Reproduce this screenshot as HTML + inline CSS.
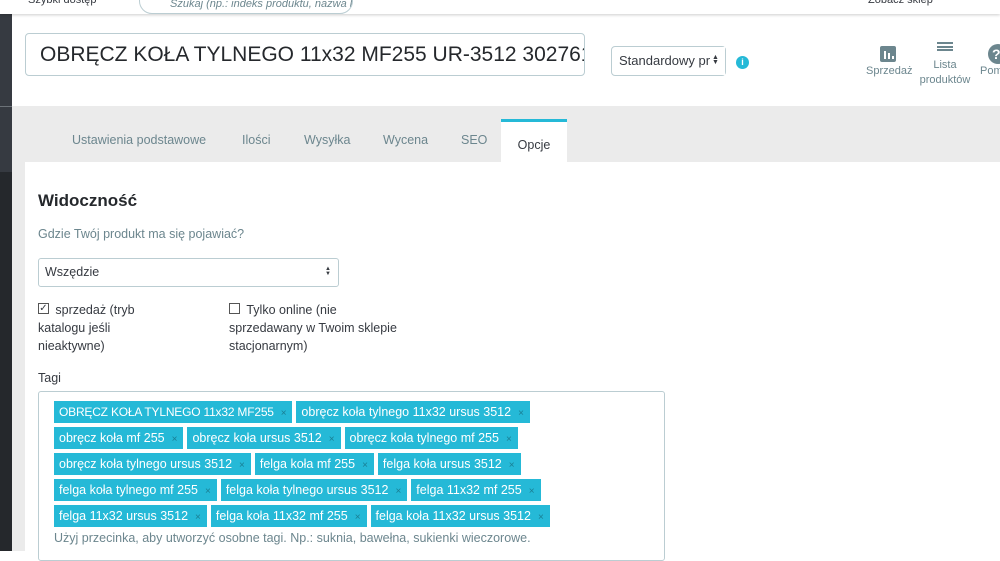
<!DOCTYPE html>
<html><head><meta charset="utf-8"><style>
*{box-sizing:border-box;margin:0;padding:0}
body{width:1000px;height:551px;overflow:hidden;background:#fff;font-family:"Liberation Sans","DejaVu Sans",sans-serif;position:relative;color:#363a41}
.abs{position:absolute}
.tag{display:inline-block;background:#25b9d7;color:#fff;font-size:12.5px;height:22px;line-height:22px;padding:0 6px 0 5px;margin:0 4px 4px 0;white-space:nowrap}
.tag i{font-style:normal;color:#1a7f94;font-size:10px;margin-left:7px}
.tag.u{font-size:12px;letter-spacing:-0.2px}
.tab{position:absolute;top:133px;font-size:12.5px;color:#6c868e}
</style></head><body>
<div class="abs" style="left:0;top:0;width:1000px;height:14px;background:#fff;box-shadow:0 1px 3px rgba(0,0,0,.2);z-index:2"></div>
<div class="abs" style="left:28px;top:-6px;font-size:11px;color:#363a41;z-index:3">Szybki dostęp</div>
<div class="abs" style="left:139px;top:-12px;width:214px;height:26px;border:1px solid #bbcdd2;border-radius:13px;background:#fff;z-index:3;font-size:11px;font-style:italic;color:#6c868e;padding:9px 0 0 30px;white-space:nowrap;overflow:hidden">Szukaj (np.: indeks produktu, nazwa kl</div>
<div class="abs" style="left:868px;top:-6px;font-size:11px;z-index:3">Zobacz sklep</div>
<div class="abs" style="left:0;top:14px;width:12px;height:158px;background:#363a41"></div>
<div class="abs" style="left:0;top:106px;width:12px;height:1px;background:#6c7278"></div>
<div class="abs" style="left:0;top:172px;width:12px;height:379px;background:#25282c"></div>
<div class="abs" style="left:25px;top:33px;width:560px;height:43px;border:1px solid #bbcdd2;border-radius:4px;font-size:21px;line-height:42px;padding-left:14px;overflow:hidden;white-space:nowrap;color:#25282c">OBRĘCZ KOŁA TYLNEGO 11x32 MF255 UR-3512 3027613</div>
<div class="abs" style="left:611px;top:46px;width:115px;height:30px;border:1px solid #bbcdd2;border-radius:4px;font-size:13px;line-height:28px;padding-left:7px;overflow:hidden;white-space:nowrap;background:#fff">Standardowy pr</div>
<div class="abs" style="left:710px;top:47px;width:15px;height:28px;background:#fff"></div>
<div class="abs" style="left:712px;top:55px;font-size:7px;line-height:5px">▲<br>▼</div>
<div class="abs" style="left:736px;top:56px;width:13px;height:13px;border-radius:50%;background:#25b9d7;color:#fff;font-size:9px;font-weight:bold;text-align:center;line-height:13px">i</div>
<div class="abs" style="left:880px;top:46px;width:16px;height:16px;background:#6c868e;border-radius:2px"></div>
<div class="abs" style="left:884px;top:51px;width:2px;height:8px;background:#fff"></div><div class="abs" style="left:888px;top:53px;width:2px;height:6px;background:#fff"></div><div class="abs" style="left:892px;top:56px;width:2px;height:3px;background:#fff"></div>
<div class="abs" style="left:866px;top:65px;font-size:11px;color:#6c868e">Sprzedaż</div>
<div class="abs" style="left:937px;top:42px;width:16px;height:9px;border-top:2px solid #6c868e;border-bottom:2px solid #6c868e"></div>
<div class="abs" style="left:937px;top:46px;width:16px;height:2px;background:#6c868e"></div>
<div class="abs" style="left:918px;top:58px;font-size:11px;color:#6c868e;text-align:center;width:54px;line-height:15px">Lista<br>produktów</div>
<div class="abs" style="left:988px;top:44px;width:20px;height:20px;border-radius:50%;background:#6c868e;color:#fff;font-weight:bold;font-size:14px;line-height:20px;padding-left:4px">?</div>
<div class="abs" style="left:980px;top:65px;font-size:11px;color:#6c868e">Pom</div>
<div class="abs" style="left:12px;top:106px;width:988px;height:445px;background:#ebebeb"></div>
<div class="tab" style="left:72px">Ustawienia podstawowe</div>
<div class="tab" style="left:242px">Ilości</div>
<div class="tab" style="left:304px">Wysyłka</div>
<div class="tab" style="left:383px">Wycena</div>
<div class="tab" style="left:461px">SEO</div>
<div class="abs" style="left:501px;top:119px;width:66px;height:44px;background:#fff;border-top:3px solid #25b9d7;font-size:12.5px;color:#363a41;text-align:center;padding-top:16px">Opcje</div>
<div class="abs" style="left:25px;top:162px;width:975px;height:389px;background:#fff"></div>
<div class="abs" style="left:38px;top:191px;font-size:17px;font-weight:bold;color:#25282c">Widoczność</div>
<div class="abs" style="left:38px;top:227px;font-size:12.5px;color:#6c868e">Gdzie Twój produkt ma się pojawiać?</div>
<div class="abs" style="left:38px;top:258px;width:301px;height:29px;border:1px solid #bbcdd2;border-radius:3px;font-size:12.5px;line-height:27px;padding-left:6px">Wszędzie</div>
<div class="abs" style="left:325px;top:267px;font-size:6px;line-height:5px">▲<br>▼</div>
<div class="abs" style="left:38px;top:303px;width:11px;height:11px;border:1px solid #555;font-size:10px;line-height:9px;text-align:center">✓</div>
<div class="abs" style="left:38px;top:301px;font-size:12.5px;line-height:18px;width:110px">&nbsp;&nbsp;&nbsp;&nbsp;&nbsp;sprzedaż (tryb katalogu jeśli nieaktywne)</div>
<div class="abs" style="left:229px;top:303px;width:11px;height:11px;border:1px solid #555"></div>
<div class="abs" style="left:229px;top:301px;font-size:12.5px;line-height:18px;width:180px">&nbsp;&nbsp;&nbsp;&nbsp;&nbsp;Tylko online (nie sprzedawany w Twoim sklepie stacjonarnym)</div>
<div class="abs" style="left:38px;top:371px;font-size:12.5px">Tagi</div>
<div class="abs" style="left:38px;top:391px;width:627px;height:170px;border:1px solid #bbcdd2;border-radius:3px;padding:9px 10px 0 15px">
<div style="width:560px;font-size:0">
<span class="tag u">OBRĘCZ KOŁA TYLNEGO 11x32 MF255<i>×</i></span><span class="tag">obręcz koła tylnego 11x32 ursus 3512<i>×</i></span><span class="tag">obręcz koła mf 255<i>×</i></span><span class="tag">obręcz koła ursus 3512<i>×</i></span><span class="tag">obręcz koła tylnego mf 255<i>×</i></span><span class="tag">obręcz koła tylnego ursus 3512<i>×</i></span><span class="tag">felga koła mf 255<i>×</i></span><span class="tag">felga koła ursus 3512<i>×</i></span><span class="tag">felga koła tylnego mf 255<i>×</i></span><span class="tag">felga koła tylnego ursus 3512<i>×</i></span><span class="tag">felga 11x32 mf 255<i>×</i></span><span class="tag">felga 11x32 ursus 3512<i>×</i></span><span class="tag">felga koła 11x32 mf 255<i>×</i></span><span class="tag">felga koła 11x32 ursus 3512<i>×</i></span>
</div>
<div style="font-size:12.5px;color:#6c868e;margin-top:0">Użyj przecinka, aby utworzyć osobne tagi. Np.: suknia, bawełna, sukienki wieczorowe.</div>
</div>
</body></html>
